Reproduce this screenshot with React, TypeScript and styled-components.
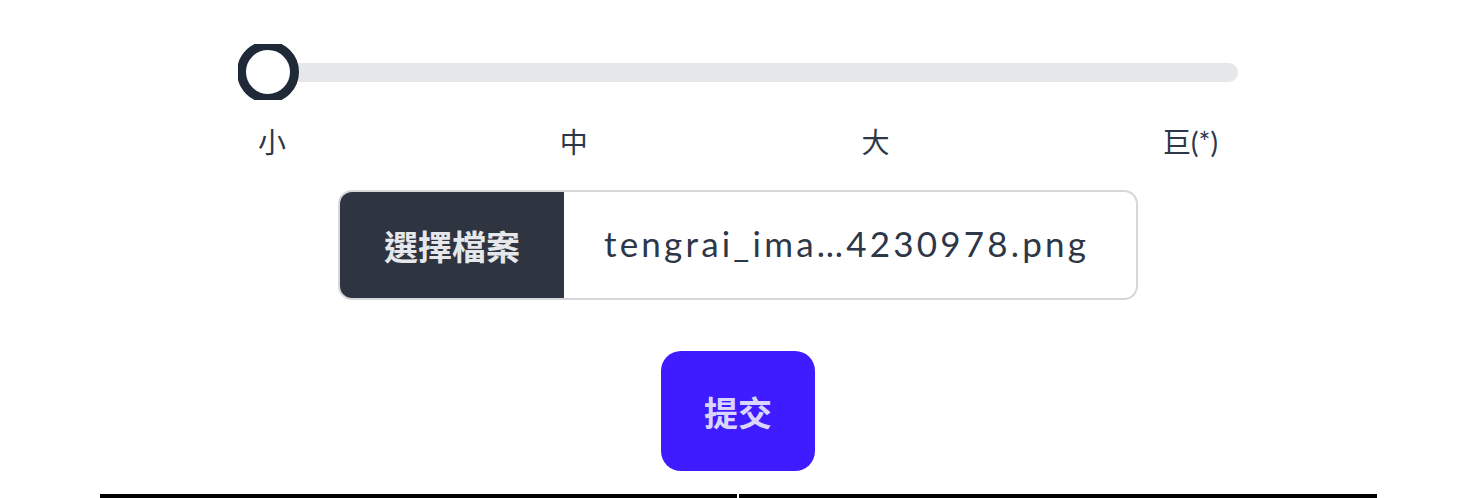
import styled, { createGlobalStyle } from "styled-components";

const GlobalStyle = createGlobalStyle`
  html, body {
    margin: 0;
    padding: 0;
    background: #ffffff;
  }
  body {
    font-family: "Lato", "Noto Sans CJK TC", sans-serif;
    color: #2d3748;
  }
`;

const Page = styled.div`
  display: flex;
  flex-direction: column;
  align-items: center;
  padding-top: 44px;
  height: 498px;
  box-sizing: border-box;
  overflow: hidden;
  & > * {
    flex-shrink: 0;
  }
`;

const SizeField = styled.div`
  width: 1000px;
  display: flex;
  flex-direction: column;
`;

const Range = styled.div`
  position: relative;
  height: 56px;
  overflow: hidden;
  display: flex;
  align-items: center;
`;

const Track = styled.div`
  flex: 1;
  height: 19px;
  border-radius: 10px;
  background: #e5e7ea;
`;

const Thumb = styled.div<{ percent: number }>`
  position: absolute;
  top: -3px;
  left: calc(${(p) => p.percent}% - 1px);
  width: 62px;
  height: 62px;
  box-sizing: border-box;
  border-radius: 50%;
  border: 9px solid #1f2937;
  background: #ffffff;
`;

const Labels = styled.div`
  display: flex;
  justify-content: space-between;
  padding: 0 20px;
  margin-top: 22px;
  font-family: "Lato", "Noto Sans CJK TC", sans-serif;
  font-size: 28px;
  line-height: 40px;
  color: #2d3748;
`;

const FileInput = styled.label`
  margin-top: 28px;
  width: 800px;
  height: 110px;
  box-sizing: border-box;
  display: flex;
  align-items: stretch;
  border: 2px solid #d5d7db;
  border-radius: 14px;
  overflow: hidden;
`;

const FileButton = styled.span`
  width: 224px;
  flex-shrink: 0;
  display: flex;
  align-items: center;
  justify-content: center;
  background: #2e3440;
  color: #e5e7eb;
  font-family: "Noto Sans CJK TC", sans-serif;
  font-weight: 700;
  font-size: 34px;
`;

const FileName = styled.span`
  flex: 1;
  display: flex;
  align-items: center;
  padding-left: 40px;
  padding-bottom: 4px;
  font-family: "Lato", sans-serif;
  font-size: 35px;
  letter-spacing: 3.2px;
  color: #2d3748;
`;

const Submit = styled.button`
  margin-top: 51px;
  width: 154px;
  height: 120px;
  border: none;
  border-radius: 20px;
  background: #3e1cff;
  color: #d9d5ff;
  font-family: "Noto Sans CJK TC", sans-serif;
  font-weight: 700;
  font-size: 34px;
  cursor: pointer;
`;

const Table = styled.div`
  margin-top: 23px;
  width: 1277px;
  display: grid;
  grid-template-columns: 1fr 1fr;
  column-gap: 2px;
`;

const HeadCell = styled.div`
  border-top: 4px solid #000000;
  height: 20px;
`;

const sizes = ["小", "中", "大", "巨(*)"];

export default function App() {
  return (
    <>
      <GlobalStyle />
      <Page>
        <SizeField>
          <Range>
            <Track />
            <Thumb percent={0} />
          </Range>
          <Labels>
            {sizes.map((s) => (
              <span key={s}>{s}</span>
            ))}
          </Labels>
        </SizeField>
        <FileInput>
          <FileButton>選擇檔案</FileButton>
          <FileName>tengrai_ima…4230978.png</FileName>
        </FileInput>
        <Submit>提交</Submit>
        <Table>
          <HeadCell />
          <HeadCell />
        </Table>
      </Page>
    </>
  );
}
